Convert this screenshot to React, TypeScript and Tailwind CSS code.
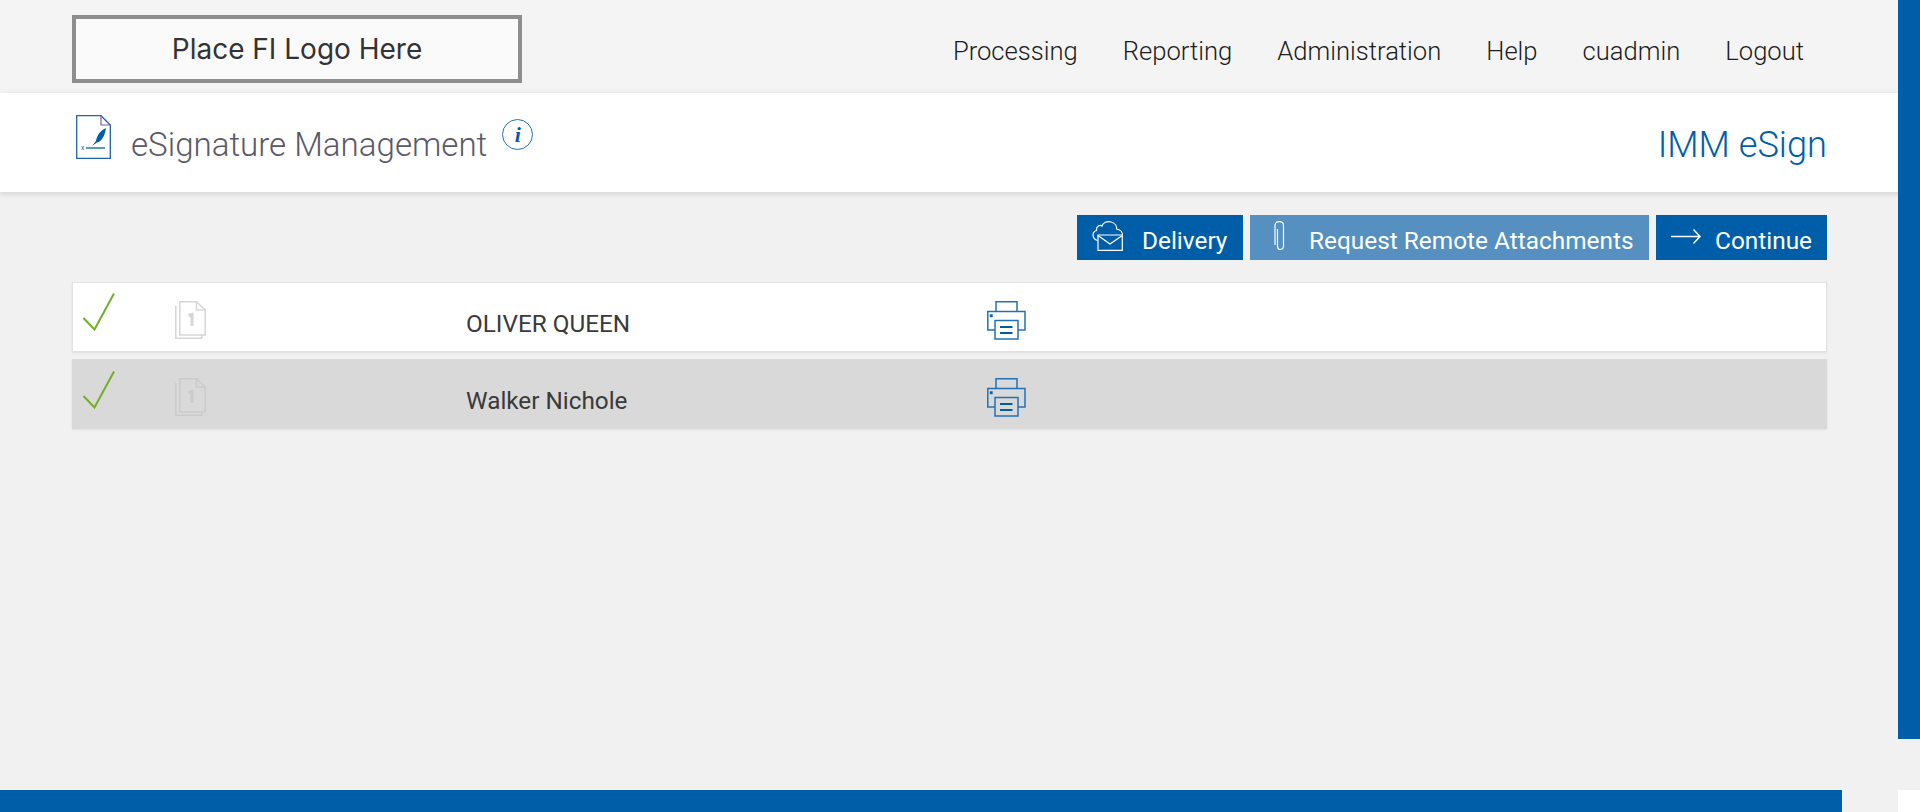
import React from "react";

const roboto = "font-['Roboto',sans-serif]";

function DocSign() {
  return (
    <svg width="35" height="44" viewBox="0 0 35 44" fill="none">
      <path d="M0.700 0.700H25L34.300 10V43.300H0.700Z" stroke="#1f63ad" strokeWidth="1.300" fill="#fff" />
      <path d="M25 0.700V10H34.300" stroke="#7a5fb5" strokeWidth="1.200" />
      <path d="M10 33H29" stroke="#005ea8" strokeWidth="1.300" />
      <path d="M30 13C25 15 21 20 20 26L16 31L21 27.500C26 26.500 29 20 30 13Z" fill="#005ea8" />
      <text x="5" y="35" fontSize="6.500" fill="#005ea8" fontFamily="Roboto, sans-serif">x</text>
    </svg>
  );
}

function Check() {
  return (
    <svg width="32" height="38" viewBox="0 0 32 38" fill="none">
      <path d="M0.500 25L11.500 36.500L31 0.500" stroke="#73ad2c" strokeWidth="2" />
    </svg>
  );
}

function Pages({ color }: { color: string }) {
  return (
    <svg width="31" height="38" viewBox="0 0 31 38" fill="none" stroke={color} strokeWidth="1.500">
      <path d="M0.800 5V37.200H27V34" />
      <path d="M4.800 0.800H21.500L30.200 9V34H4.800Z" />
      <path d="M21.500 0.800V9H30.200" />
      <path d="M13.500 14.500L17 13.500V25" strokeWidth="3" />
    </svg>
  );
}

function Printer() {
  return (
    <svg width="39" height="39" viewBox="0 0 39 39" fill="none" stroke="#2470b5" strokeWidth="1.500">
      <path d="M9 10.500V0.800H30V10.500" />
      <path d="M8 29H0.800V10.500H38V29H31" />
      <path d="M8 19.500H31V38H8Z" />
      <path d="M13 26H25.500M13 32H25.500" strokeWidth="2" stroke="#005ea8" />
      <path d="M3 13.500H5.500V16H3Z" fill="#005ea8" strokeWidth="0.500" />
    </svg>
  );
}

function Row({ name, gray }: { name: string; gray?: boolean }) {
  return (
    <div
      className={`flex h-[70px] items-start border shadow-[0_1px_2px_rgba(0,0,0,0.08)] ${
        gray ? "border-[#d9d9d9] bg-[#d9d9d9]" : "border-[#e2e2e2] bg-white"
      }`}
    >
      <div className={`w-[102px] shrink-0 pl-[10px] ${gray ? "pt-[11px]" : "pt-[10px]"}`}>
        <Check />
      </div>
      <div className="w-[291px] shrink-0 pt-[18px]">
        <Pages color={gray ? "#cbcbcb" : "#d6d6d6"} />
      </div>
      <div className={`w-[521px] shrink-0 pt-[26px] text-[24.300px] leading-[30px] text-[#3a3a3a] ${roboto}`}>{name}</div>
      <div className="pt-[18px]">
        <Printer />
      </div>
    </div>
  );
}

function ActionButton({ icon, label, width, light, gap }: { icon: React.ReactNode; label: string; width: string; light?: boolean; gap: string }) {
  return (
    <div className={`flex h-[45px] items-start text-[24.400px] leading-[45px] text-white ${roboto} ${width} ${gap} ${light ? "bg-[#5590c0]" : "bg-[#005ea8]"}`}>
      {icon}
      <span className="whitespace-nowrap pt-[3px]">{label}</span>
    </div>
  );
}

export default function App() {
  return (
    <div className="relative h-[812px] w-[1920px] overflow-hidden bg-[#f1f1f1]">
      <header className="flex h-[93px] items-start justify-between bg-[#f4f4f4] pl-[72px] pr-[116px]">
        <div className="mt-[15px] flex h-[68px] w-[450px] items-center justify-center border-[4px] border-[#8e8e8e] bg-[#fafafa] font-['Inter',sans-serif] text-[28px] font-normal text-[#333333]">
          Place FI Logo Here
        </div>
        <nav className={`flex gap-[45px] pt-[34px] text-[25.600px] font-light leading-[34px] text-[#1c1c1c] ${roboto}`}>
          <span>Processing</span>
          <span>Reporting</span>
          <span>Administration</span>
          <span>Help</span>
          <span>cuadmin</span>
          <span>Logout</span>
        </nav>
      </header>

      <section className="flex h-[99px] items-start justify-between bg-white pl-[76px] pr-[93px] shadow-[0_2px_6px_rgba(0,0,0,0.13)]">
        <div className="flex items-start">
          <div className="pt-[22px]"><DocSign /></div>
          <h1 className={`ml-[20px] pt-[30px] text-[33.100px] font-light leading-[44px] text-[#5a5a66] ${roboto}`}>eSignature Management</h1>
          <div className="ml-[15px] mt-[26px] flex h-[31px] w-[31px] items-center justify-center rounded-full border border-[#2470b5] font-['Liberation_Serif',serif] text-[22px] font-bold italic leading-none text-[#005ea8]">
            i
          </div>
        </div>
        <div className={`pt-[29px] text-[36.200px] font-light leading-[46px] text-[#005ea8] ${roboto}`}>IMM eSign</div>
      </section>

      <main className="pl-[72px] pr-[93px] pt-[23px]">
        <div className="flex justify-end gap-[7px]">
          <ActionButton
            width="w-[166px]"
            gap="gap-[19px] pl-[15px]"
            label="Delivery"
            icon={
              <svg className="mt-[6px]" width="31" height="30" viewBox="0 0 31 30" fill="none" stroke="#fff" strokeWidth="1.200">
                <path d="M5.500 19.500C0 18 -0.500 11 4.500 9.500C4 5 8 3.500 10 5C11 1.500 15 0 19 1C23 2 25 5 24.500 8C28 8.500 30.500 11 30.500 14" />
                <path d="M6 14H30.300V29.300H6Z" fill="#005ea8" />
                <path d="M6 14.500L18 23L30.300 14.500" />
              </svg>
            }
          />
          <ActionButton
            light
            width="w-[399px]"
            gap="gap-[24px] pl-[24px]"
            label="Request Remote Attachments"
            icon={
              <svg className="mt-[6px]" width="11" height="30" viewBox="0 0 11 30" fill="none" stroke="#fff" strokeWidth="1.200">
                <path d="M3.500 8V25C3.500 27 4.200 28.500 5.800 28.500C7.500 28.500 9.500 28 9.500 25V4.500C9.500 1.500 8 0.700 5.500 0.700C3 0.700 1 1.500 1 4.500V24" />
              </svg>
            }
          />
          <ActionButton
            width="w-[171px]"
            gap="gap-[14px] pl-[15px]"
            label="Continue"
            icon={
              <svg className="mt-[14px]" width="30" height="15" viewBox="0 0 30 15" fill="none" stroke="#fff" strokeWidth="1.500">
                <path d="M0 7.500H29M22.500 0.500L29 7.500L22.500 14.500" />
              </svg>
            }
          />
        </div>
        <div className="mt-[22px] flex flex-col gap-[7px]">
          <Row name="OLIVER QUEEN" />
          <Row name="Walker Nichole" gray />
        </div>
      </main>

      <div className="absolute right-0 top-0 h-[739px] w-[22px] bg-[#005ea8]" />
      <div className="absolute bottom-0 right-0 h-[22px] w-[22px] bg-white" />
      <footer className="absolute bottom-0 left-0 h-[22px] w-[1842px] bg-[#005ea8]" />
    </div>
  );
}
